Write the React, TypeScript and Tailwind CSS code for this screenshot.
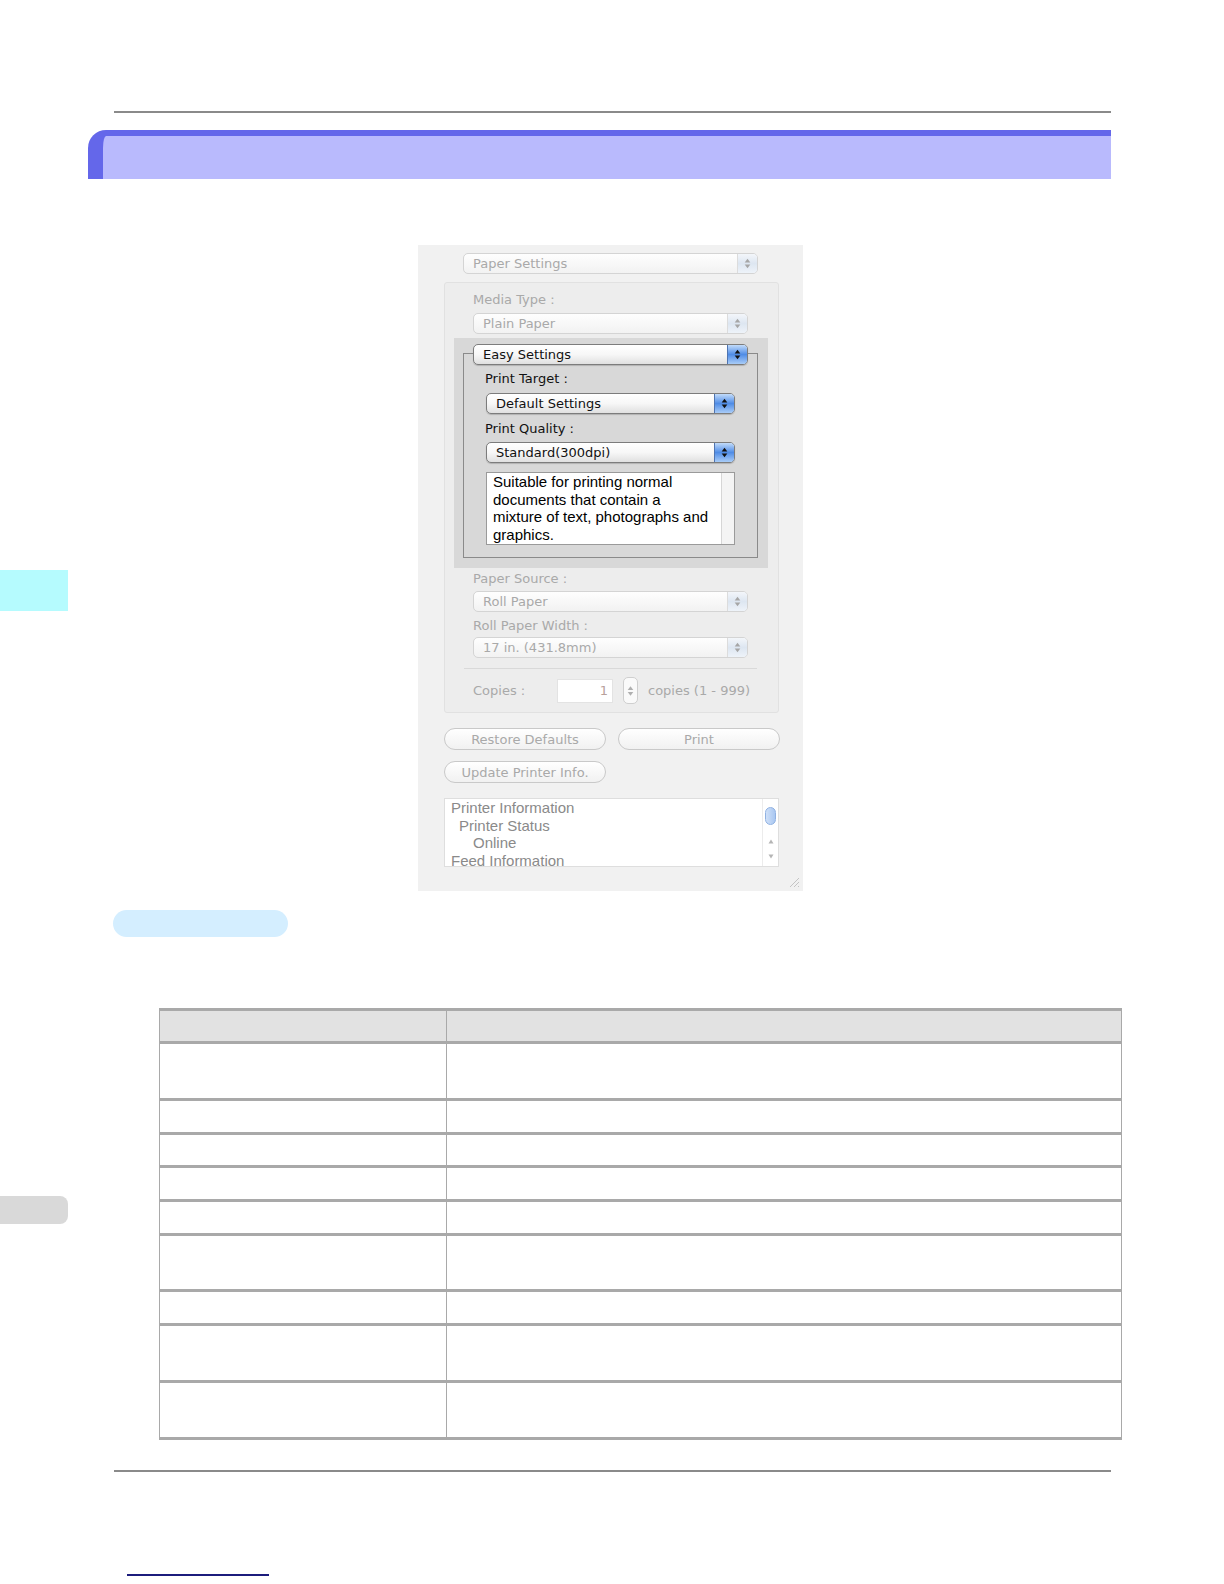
import clsx from 'clsx'

const ui = "font-['DejaVu_Sans',Verdana,sans-serif]"
const helv = "font-['Liberation_Sans',Arial,sans-serif]"

function Arrows({ color, w = 7, h = 11 }: { color: string; w?: number; h?: number }) {
  return (
    <svg width={w} height={h} viewBox="0 0 7 11">
      <path d="M3.5 0.8 L6.3 4.4 H0.7 Z" fill={color} />
      <path d="M3.5 10.2 L6.3 6.6 H0.7 Z" fill={color} />
    </svg>
  )
}

function Popup({ text, active, className }: { text: string; active?: boolean; className?: string }) {
  return (
    <div
      className={clsx(
        'flex h-[21px] shrink-0 overflow-hidden rounded-[5px] border',
        active
          ? 'border-[#7c7c7c] bg-linear-to-b from-white via-[#f7f7f7] to-[#e0e0e0] text-[#111] shadow-[0_1px_1px_rgba(0,0,0,0.18)]'
          : 'border-[#d4d4d4] bg-linear-to-b from-[#fefefe] to-[#f2f2f2] text-[#a9a9a9]',
        className,
      )}
    >
      <div className="flex flex-1 items-center pl-[9px] leading-none">{text}</div>
      <div
        className={clsx(
          'flex w-[20px] items-center justify-center border-l',
          active
            ? 'border-[#4f74b0] bg-linear-to-b from-[#c2dbf9] via-[#4f8ce6] to-[#a9ccf7]'
            : 'border-[#dcdcdc] bg-linear-to-b from-[#f3f6fa] via-[#dde6f1] to-[#eef3f9]',
        )}
      >
        <Arrows color={active ? '#111' : '#a6a6a6'} />
      </div>
    </div>
  )
}

function Label({ text, active, className }: { text: string; active?: boolean; className?: string }) {
  return (
    <div className={clsx('flex h-[16px] items-center leading-none', active ? 'text-[#111]' : 'text-[#a9a9a9]', className)}>
      {text}
    </div>
  )
}

function PillButton({ text, className }: { text: string; className?: string }) {
  return (
    <div
      className={clsx(
        'flex h-[22px] items-center justify-center rounded-full border border-[#c9c9c9] bg-linear-to-b from-white to-[#f1f1f1] leading-none text-[#a9a9a9]',
        className,
      )}
    >
      {text}
    </div>
  )
}

function PrintDialog() {
  return (
    <div className={clsx('relative ml-[418px] mt-[66px] h-[646px] w-[385px] bg-[#f1f1f1] pt-[8px] text-[13px]', ui)}>
      <Popup text="Paper Settings" className="ml-[45px] w-[295px]" />

      {/* group box */}
      <div className="ml-[26px] mt-[8px] flex h-[431px] w-[335px] flex-col rounded-[3px] border border-[#e1e1e1] bg-[#ededed] pt-[8px]">
        <Label text="Media Type :" className="ml-[28px]" />
        <Popup text="Plain Paper" className="ml-[28px] mt-[6px] w-[275px]" />

        <div className="ml-[9px] mt-[4px] h-[230px] w-[314px] bg-[#d8d8d8] pl-[9px] pt-[15px]">
          <div className="flex h-[205px] w-[295px] flex-col border border-[#8a8a8a]">
            <Popup text="Easy Settings" active className="ml-[9px] -mt-[10px] w-[275px]" />
            <Label text="Print Target :" active className="ml-[21px] mt-[5px]" />
            <Popup text="Default Settings" active className="ml-[22px] mt-[7px] w-[249px]" />
            <Label text="Print Quality :" active className="ml-[21px] mt-[6px]" />
            <Popup text="Standard(300dpi)" active className="ml-[22px] mt-[6px] w-[249px]" />
            <div className={clsx('ml-[22px] mt-[9px] flex h-[73px] w-[249px] border border-[#9a9a9a] bg-white', helv)}>
              <div className="flex-1 whitespace-nowrap pl-[6px] text-[15px] leading-[17.5px] text-black">
                Suitable for printing normal
                <br />
                documents that contain a
                <br />
                mixture of text, photographs and
                <br />
                graphics.
              </div>
              <div className="w-[13px] border-l border-[#d6d6d6] bg-[#f4f4f4]" />
            </div>
          </div>
        </div>

        <Label text="Paper Source :" className="ml-[28px] mt-[2px]" />
        <Popup text="Roll Paper" className="ml-[28px] mt-[5px] w-[275px]" />
        <Label text="Roll Paper Width :" className="ml-[28px] mt-[5px]" />
        <Popup text="17 in. (431.8mm)" className="ml-[28px] mt-[4px] w-[275px]" />
        <div className="ml-[19px] mt-[10px] h-px w-[293px] bg-[#d9d9d9]" />

        <div className="mt-[8px] flex h-[27px] items-center">
          <Label text="Copies :" className="ml-[28px] w-[84px]" />
          <div className="flex h-[24px] w-[56px] items-center justify-end border border-[#e3e3e3] bg-white pr-[4px] text-[#b8a19b]">
            1
          </div>
          <div className="ml-[10px] flex h-[27px] w-[15px] flex-col items-center justify-center rounded-[5px] border border-[#cfcfcf] bg-[#fafafa]">
            <Arrows color="#b0b0b0" w={7} h={16} />
          </div>
          <div className="ml-[10px] text-[#a9a9a9]">copies (1 - 999)</div>
        </div>
      </div>

      <div className="ml-[26px] mt-[15px] flex gap-[12px]">
        <PillButton text="Restore Defaults" className="w-[162px]" />
        <PillButton text="Print" className="w-[162px]" />
      </div>
      <PillButton text="Update Printer Info." className="ml-[26px] mt-[11px] w-[162px]" />

      <div className={clsx('ml-[26px] mt-[15px] flex h-[69px] w-[335px] overflow-hidden border border-[#dedede] bg-white', helv)}>
        <div className="flex-1 text-[15px] leading-[17.5px] text-[#8a8a8a]">
          <div className="pl-[6px]">Printer Information</div>
          <div className="pl-[14px]">Printer Status</div>
          <div className="pl-[28px]">Online</div>
          <div className="pl-[6px]">Feed Information</div>
        </div>
        <div className="flex w-[16px] flex-col items-center border-l border-[#ececec] pt-[8px]">
          <div className="h-[18px] w-[11px] rounded-full border border-[#8fb1e2] bg-linear-to-r from-[#cfe0f8] to-[#a9c7f1]" />
          <div className="mt-[14px]">
            <svg width="6" height="5" viewBox="0 0 6 5">
              <path d="M3 0.5 L5.5 4.5 H0.5 Z" fill="#b5b5b5" />
            </svg>
          </div>
          <div className="mt-[10px]">
            <svg width="6" height="5" viewBox="0 0 6 5">
              <path d="M3 4.5 L5.5 0.5 H0.5 Z" fill="#b5b5b5" />
            </svg>
          </div>
        </div>
      </div>

      {/* resize grip */}
      <svg className="absolute bottom-[3px] right-[3px]" width="13" height="13" viewBox="0 0 13 13">
        <path d="M12 3 L3 12 M12 7 L7 12 M12 11 L11 12" stroke="#c4c4c4" strokeWidth="1" />
      </svg>
    </div>
  )
}

const rowHeights = ['h-[57px]', 'h-[34px]', 'h-[33px]', 'h-[34px]', 'h-[34px]', 'h-[56px]', 'h-[34px]', 'h-[57px]', 'h-[57px]']

function SettingsTable() {
  return (
    <div className="ml-[159px] mt-[71px] w-[963px] border-b-[3px] border-l border-r border-[#a9a9a9]">
      <div className="flex h-[33px] border-t-[3px] border-[#a9a9a9] bg-[#e2e2e2]">
        <div className="w-[287px] border-r border-[#a9a9a9]" />
        <div className="flex-1" />
      </div>
      {rowHeights.map((h, i) => (
        <div key={i} className={clsx('flex border-t-[3px] border-[#a9a9a9]', h)}>
          <div className="w-[287px] border-r border-[#a9a9a9]" />
          <div className="flex-1" />
        </div>
      ))}
    </div>
  )
}

export default function App() {
  return (
    <div className="relative flex h-[1584px] w-[1224px] flex-col overflow-hidden bg-white">
      {/* side tabs */}
      <div className="absolute left-0 top-[570px] h-[41px] w-[68px] bg-[#b5fbfe]" />
      <div className="absolute left-0 top-[1196px] h-[28px] w-[68px] rounded-r-[8px] bg-[#d9d9d9]" />

      <div className="ml-[114px] mt-[111px] h-[2px] w-[997px] bg-[#8a8a8a]" />

      <div className="ml-[88px] mt-[17px] h-[49px] w-[1023px] rounded-tl-[18px] border-l-[15px] border-t-[6px] border-[#6467ea] bg-[#b9bafd]" />

      <PrintDialog />

      <div className="ml-[113px] mt-[19px] h-[27px] w-[175px] rounded-full bg-[#d4eeff]" />

      <SettingsTable />

      <div className="ml-[114px] mt-[30px] h-[2px] w-[997px] bg-[#8a8a8a]" />

      <div className="ml-[127px] mt-[102px] h-[2px] w-[142px] bg-[#1c1c7c]" />
    </div>
  )
}
